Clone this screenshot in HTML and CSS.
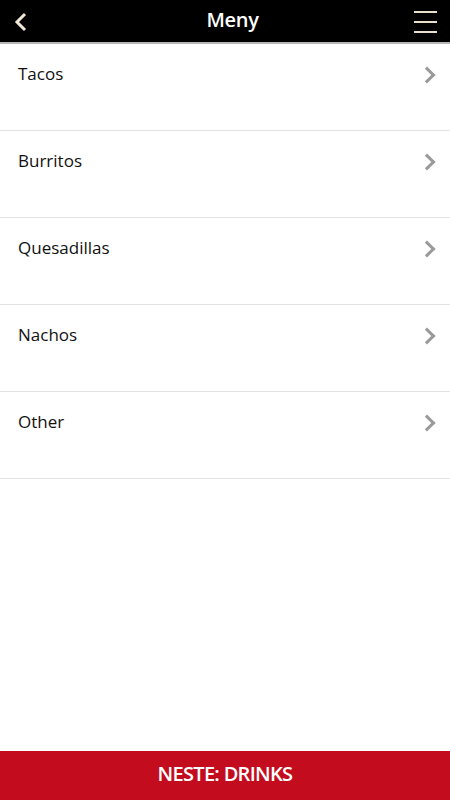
FILE: index.html
```html
<!DOCTYPE html>
<html lang="no">
<head>
    <meta charset="UTF-8">
    <title>Meny</title>
    <link rel="stylesheet" href="styles.css">
</head>
<body>
    <div class="app">
        <header class="topbar">
            <a class="back" href="#">
                <svg width="14" height="20" viewBox="0 0 14 20">
                    <path d="M11 2 L3 10 L11 18" fill="none" stroke="#f2e8da" stroke-width="3"/>
                </svg>
            </a>
            <h1 class="title">Meny</h1>
            <a class="menu" href="#">
                <span></span><span></span><span></span>
            </a>
        </header>

        <ul class="list">
            <li class="item"><span>Tacos</span><i class="chev"></i></li>
            <li class="item"><span>Burritos</span><i class="chev"></i></li>
            <li class="item"><span>Quesadillas</span><i class="chev"></i></li>
            <li class="item"><span>Nachos</span><i class="chev"></i></li>
            <li class="item"><span>Other</span><i class="chev"></i></li>
        </ul>

        <a class="next" href="#">NESTE: DRINKS</a>
    </div>
</body>
</html>
```

FILE: styles.css
```css
body {
    margin: 0;
    font-family: "Open Sans", "Noto Sans", sans-serif;
    background: #fff;
}
.app {
    display: flex;
    flex-direction: column;
    height: 800px;
}
.topbar {
    height: 42px;
    background: #000;
    border-bottom: 2px solid #b5b5b5;
    display: flex;
    align-items: center;
    justify-content: space-between;
    padding: 0 13px 0 14px;
}
.back {
    display: flex;
    width: 30px;
    margin-top: 1px;
}
.title {
    margin: 0 0 3px 14px;
    color: #fff;
    font-size: 20px;
    font-weight: 600;
    letter-spacing: -0.3px;
}
.menu {
    display: flex;
    flex-direction: column;
    gap: 8px;
    width: 23px;
    padding-left: 7px;
    margin-top: 1px;
}
.menu span {
    display: block;
    height: 2px;
    background: #eadfce;
}
.list {
    list-style: none;
    margin: 0;
    padding: 0;
    flex: 1;
}
.item {
    display: flex;
    justify-content: space-between;
    padding: 19px 17px 0 18px;
    height: 67px;
    border-bottom: 1px solid #e3e3e3;
    font-size: 17px;
    line-height: 22px;
    color: #111;
}
.chev {
    width: 9px;
    height: 9px;
    border-top: 3px solid #9a9a9a;
    border-right: 3px solid #9a9a9a;
    transform: rotate(45deg);
    margin-top: 6px;
}
.next {
    height: 49px;
    background: #c30d1e;
    color: #fff;
    text-decoration: none;
    display: flex;
    align-items: center;
    justify-content: center;
    padding-bottom: 4px;
    box-sizing: border-box;
    font-size: 20px;
    font-weight: 600;
    letter-spacing: -0.7px;
}
```
